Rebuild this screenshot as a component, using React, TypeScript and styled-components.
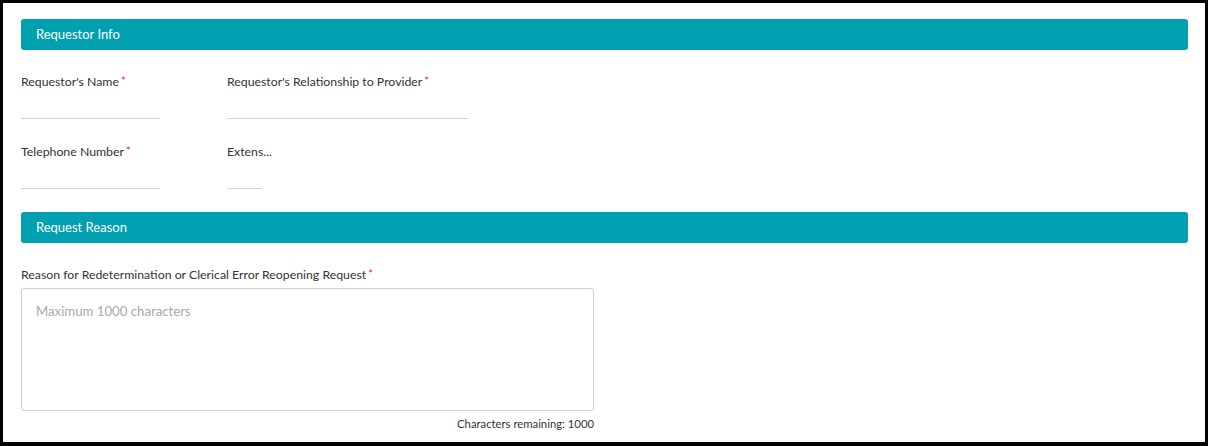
import React from 'react'
import styled, { createGlobalStyle } from 'styled-components'

const GlobalStyle = createGlobalStyle`
  html, body {
    margin: 0;
    padding: 0;
    background: #fff;
  }
  body {
    font-family: Lato, "Open Sans", Arial, sans-serif;
  }
`

const Frame = styled.div`
  box-sizing: border-box;
  height: 446px;
  border: 3px solid #000;
  border-bottom-width: 4px;
  padding: 16px 17px 0 18px;
  background: #fff;
  overflow: hidden;
`

const SectionHeader = styled.div`
  height: 31px;
  line-height: 31px;
  background: #00a0b0;
  border-radius: 3px;
  color: #fff;
  font-size: 13px;
  padding-left: 15px;
`

const FieldGrid = styled.div`
  display: grid;
  grid-template-columns: 206px 1fr;
  row-gap: 25px;
  padding: 24px 0 23px;
`

const Field = styled.div<{ $width: number }>`
  display: flex;
  flex-direction: column;
  width: ${(p) => p.$width}px;
`

const Label = styled.label`
  display: block;
  height: 16px;
  font-size: 12.3px;
  line-height: 16px;
  color: #333;
  white-space: nowrap;
`

const Req = styled.span`
  color: #e8262b;
  font-size: 11px;
  line-height: 0;
  vertical-align: 1px;
  margin-left: 2px;
`

const LineInput = styled.input`
  box-sizing: border-box;
  height: 29px;
  border: none;
  border-bottom: 1px solid #d4d4d4;
  outline: none;
  padding: 0;
  background: transparent;
  font-family: inherit;
  font-size: 13px;
`

const ReasonBlock = styled.div`
  width: 573px;
  padding-top: 24px;
  display: flex;
  flex-direction: column;
`

const TextArea = styled.textarea`
  box-sizing: border-box;
  margin-top: 5px;
  height: 123px;
  width: 100%;
  border: 1px solid #cfcfcf;
  border-radius: 3px;
  padding: 12px 14px;
  font-family: inherit;
  font-size: 13.2px;
  line-height: 20px;
  resize: none;
  outline: none;
  color: #333;
  &::placeholder {
    color: #a9a9a9;
  }
`

const Remaining = styled.div`
  margin-top: 5px;
  text-align: right;
  font-size: 11.3px;
  line-height: 16px;
  color: #333;
`

type FieldProps = { label: string; width: number; required?: boolean }

const TextField = ({ label, width, required }: FieldProps) => (
  <Field $width={width}>
    <Label>
      {label}
      {required && <Req>*</Req>}
    </Label>
    <LineInput type="text" />
  </Field>
)

const App = () => {
  return (
    <>
      <GlobalStyle />
      <Frame>
        <SectionHeader>Requestor Info</SectionHeader>
        <FieldGrid>
          <TextField label="Requestor's Name" width={139} required />
          <TextField label="Requestor's Relationship to Provider" width={241} required />
          <TextField label="Telephone Number" width={139} required />
          <TextField label="Extens..." width={35} />
        </FieldGrid>

        <SectionHeader>Request Reason</SectionHeader>
        <ReasonBlock>
          <Label>
            Reason for Redetermination or Clerical Error Reopening Request
            <Req>*</Req>
          </Label>
          <TextArea placeholder="Maximum 1000 characters" maxLength={1000} />
          <Remaining>Characters remaining: 1000</Remaining>
        </ReasonBlock>
      </Frame>
    </>
  )
}

export default App
